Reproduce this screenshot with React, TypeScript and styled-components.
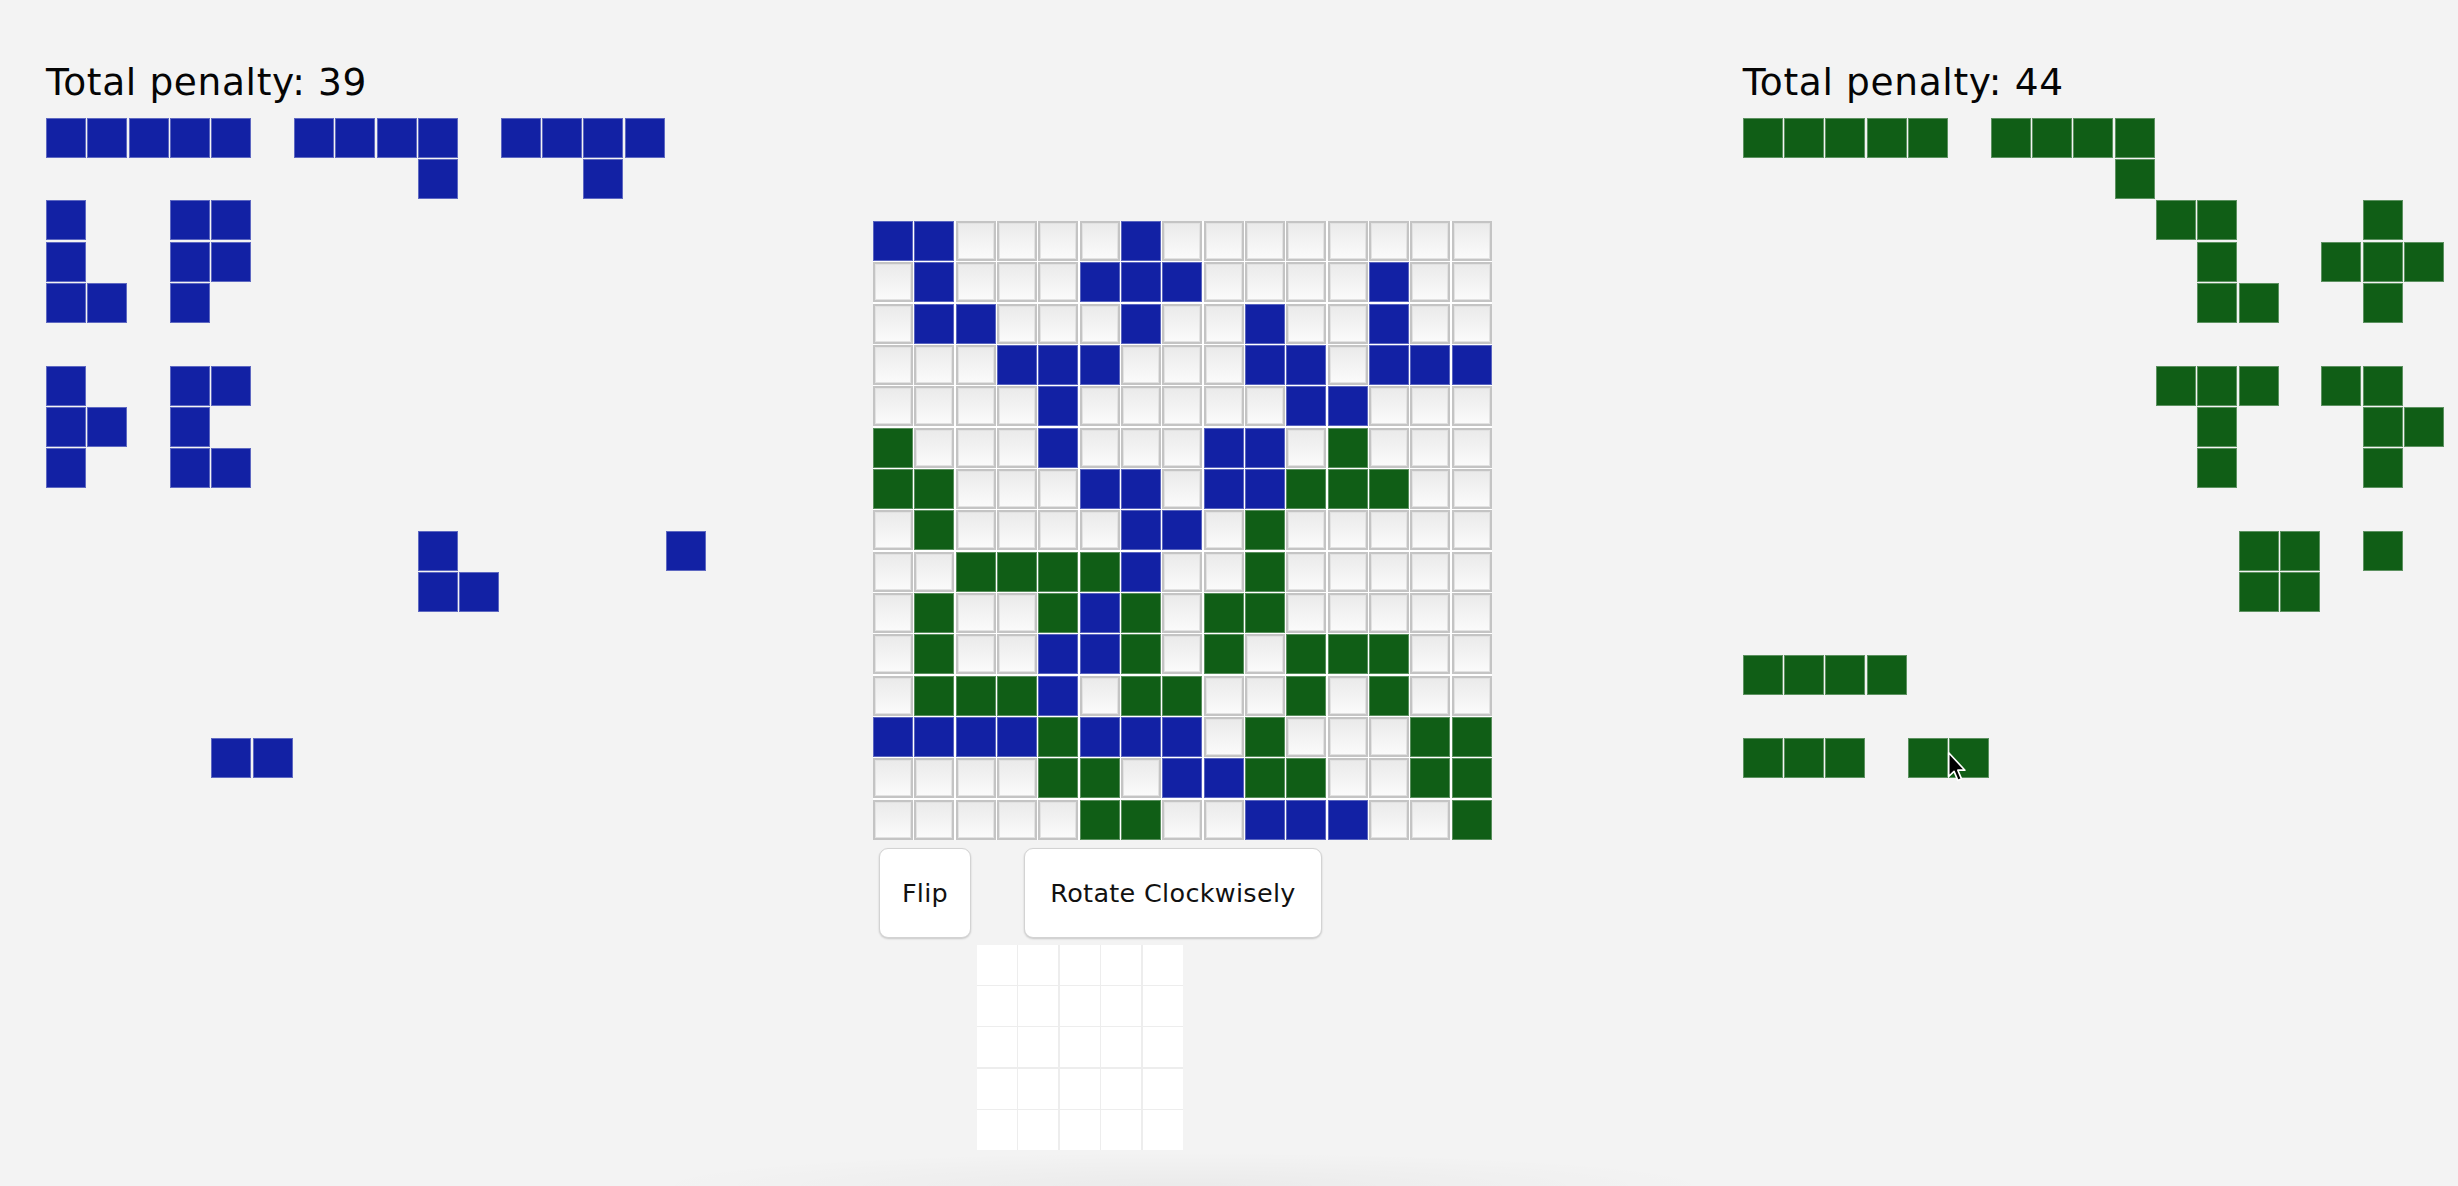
import React from "react";
import styled, { createGlobalStyle } from "styled-components";

const GlobalStyle = createGlobalStyle`
  html, body { margin: 0; padding: 0; }
  body {
    background: #f3f3f3;
    font-family: "DejaVu Sans", "Liberation Sans", sans-serif;
    color: #000;
  }
`;

const CELL = 40;
const GAP = 1.33;

type Cell = [number, number];
type Color = "blue" | "green";

const COLORS: Record<Color, string> = {
  blue: "#1221a4",
  green: "#105e16",
};

const expand = (rows: Record<number, number[]>): Cell[] =>
  Object.entries(rows).flatMap(([r, cols]) => cols.map((c) => [Number(r), c] as Cell));

const LEFT_PIECES = expand({
  0: [0, 1, 2, 3, 4, 6, 7, 8, 9, 11, 12, 13, 14],
  1: [9, 13],
  2: [0, 3, 4],
  3: [0, 3, 4],
  4: [0, 1, 3],
  6: [0, 3, 4],
  7: [0, 1, 3],
  8: [0, 3, 4],
  10: [9, 15],
  11: [9, 10],
  15: [4, 5],
});

const RIGHT_PIECES = expand({
  0: [0, 1, 2, 3, 4, 6, 7, 8, 9],
  1: [9],
  2: [10, 11, 15],
  3: [11, 14, 15, 16],
  4: [11, 12, 15],
  6: [10, 11, 12, 14, 15],
  7: [11, 15, 16],
  8: [11, 15],
  10: [12, 13, 15],
  11: [12, 13],
  13: [0, 1, 2, 3],
  15: [0, 1, 2, 4, 5],
});

const BOARD = [
  "BB....B........",
  ".B...BBB....B..",
  ".BB...B..B..B..",
  "...BBB...BB.BBB",
  "....B.....BB...",
  "G...B...BB.G...",
  "GG...BB.BBGGG..",
  ".G....BB.G.....",
  "..GGGGB..G.....",
  ".G..GBG.GG.....",
  ".G..BBG.G.GGG..",
  ".GGGB.GG..G.G..",
  "BBBBGBBB.G...GG",
  "....GG.BBGG..GG",
  ".....GG..BBB..G",
];

const Page = styled.div`
  position: relative;
  min-height: 1186px;
  box-sizing: border-box;
  background: radial-gradient(ellipse 540px 34px at 1183px 100%, rgba(0, 0, 0, 0.035), rgba(0, 0, 0, 0));
  overflow: hidden;
`;

const Layout = styled.div`
  display: grid;
  grid-template-columns: 827px 869.7px 1fr;
  padding-left: 46px;
`;

const SidePanel = styled.section`
  padding-top: 60.7px;
`;

const Title = styled.h2`
  margin: 0 0 14px 0;
  font-family: "DejaVu Sans", "Liberation Sans", sans-serif;
  font-weight: normal;
  font-size: 37.5px;
  letter-spacing: 0.65px;
  line-height: 43px;
  color: #050505;
  white-space: nowrap;
`;

const PieceGrid = styled.div`
  display: grid;
  grid-template-columns: repeat(17, ${CELL}px);
  grid-template-rows: repeat(16, ${CELL}px);
  gap: ${GAP}px;
`;

const PieceCell = styled.div<{ $r: number; $c: number; $color: Color }>`
  grid-row: ${(p) => p.$r + 1};
  grid-column: ${(p) => p.$c + 1};
  background: ${(p) => COLORS[p.$color]};
  box-shadow: inset 0 0 0 1px rgba(255, 255, 255, 0.32);
`;

const Center = styled.main`
  padding-top: 221px;
  display: flex;
  flex-direction: column;
  align-items: flex-start;
`;

const Board = styled.div`
  display: grid;
  grid-template-columns: repeat(15, ${CELL}px);
  grid-template-rows: repeat(15, ${CELL}px);
  gap: ${GAP}px;
  background: #ffffff;
`;

const BoardCell = styled.div<{ $color?: Color }>`
  box-sizing: border-box;
  ${(p) =>
    p.$color
      ? `background: ${COLORS[p.$color]}; box-shadow: inset 0 0 0 1px rgba(255,255,255,0.3);`
      : `background: linear-gradient(to bottom, #eaeaea, #fbfbfb);
         border: 2px solid #c4c4c4;
         box-shadow: inset 0 0 0 1px #e2e2e2;`}
`;

const Controls = styled.div`
  display: flex;
  gap: 53px;
  margin: 8px 0 0 6px;
`;

const Button = styled.button<{ $w: number }>`
  width: ${(p) => p.$w}px;
  height: 90px;
  padding: 0;
  background: #ffffff;
  border: 1px solid #d3d3d3;
  border-radius: 9px;
  box-shadow: 0 1px 2px rgba(0, 0, 0, 0.18);
  font-family: "DejaVu Sans", "Liberation Sans", sans-serif;
  font-size: 25.5px;
  letter-spacing: 0.3px;
  color: #111;
  cursor: pointer;
`;

const Preview = styled.div`
  display: grid;
  grid-template-columns: repeat(5, ${CELL}px);
  grid-template-rows: repeat(5, ${CELL}px);
  gap: 1.4px;
  background: #ededed;
  margin: 7px 0 0 104px;
`;

const PreviewCell = styled.div`
  background: #ffffff;
`;

const Cursor = styled.svg`
  position: absolute;
  left: 1946px;
  top: 751px;
  width: 22px;
  height: 32px;
  pointer-events: none;
`;

function Pieces({ cells, color }: { cells: Cell[]; color: Color }) {
  return (
    <PieceGrid>
      {cells.map(([r, c]) => (
        <PieceCell key={`${r}-${c}`} $r={r} $c={c} $color={color} />
      ))}
    </PieceGrid>
  );
}

export default function App() {
  return (
    <Page>
      <GlobalStyle />
      <Layout>
        <SidePanel>
          <Title>Total penalty: 39</Title>
          <Pieces cells={LEFT_PIECES} color="blue" />
        </SidePanel>
        <Center>
          <Board>
            {BOARD.flatMap((row, r) =>
              row.split("").map((ch, c) => (
                <BoardCell
                  key={`${r}-${c}`}
                  $color={ch === "B" ? "blue" : ch === "G" ? "green" : undefined}
                />
              ))
            )}
          </Board>
          <Controls>
            <Button $w={92}>Flip</Button>
            <Button $w={298}>Rotate Clockwisely</Button>
          </Controls>
          <Preview>
            {Array.from({ length: 25 }).map((_, i) => (
              <PreviewCell key={i} />
            ))}
          </Preview>
        </Center>
        <SidePanel>
          <Title>Total penalty: 44</Title>
          <Pieces cells={RIGHT_PIECES} color="green" />
        </SidePanel>
      </Layout>
      <Cursor viewBox="0 0 17 27">
        <path
          d="M1.5 1.5 L1.5 21.5 L6 17.2 L9.2 24.8 L12.3 23.5 L9.2 16.2 L15.2 16.2 Z"
          fill="#000"
          stroke="#fff"
          strokeWidth="1.4"
          strokeLinejoin="round"
        />
      </Cursor>
    </Page>
  );
}
